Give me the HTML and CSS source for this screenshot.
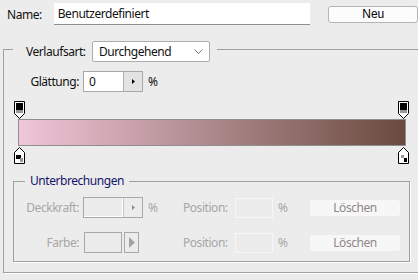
FILE: index.html
```html
<!DOCTYPE html>
<html lang="de">
<head>
    <meta charset="UTF-8">
    <meta name="viewport" content="width=device-width, initial-scale=1.0">
    <title>Verlaufs-Editor</title>
    <link rel="stylesheet" href="styles.css">
</head>
<body>
    <div class="name-row">
        <label class="name-label" for="gradName">Name:</label>
        <input type="text" id="gradName" class="name-input" value="Benutzerdefiniert">
        <button class="btn-new">Neu</button>
    </div>

    <fieldset class="frame outer">
        <legend class="type-legend">
            <span class="type-label">Verlaufsart:</span>
            <span class="select">
                Durchgehend
                <svg class="chevron" width="9" height="5" viewBox="0 0 9 5"><polyline points="0.5,0.5 4.5,4.5 8.5,0.5" fill="none" stroke="#7a7a7a"/></svg>
            </span>
        </legend>

        <div class="field-row smooth-row">
            <span class="field-label">Glättung:</span>
            <span class="spin">
                <span class="spin-value">0</span>
                <span class="spin-btn">
                    <svg width="3" height="5" viewBox="0 0 3 5"><polygon points="0,0 3,2.5 0,5" fill="#000"/></svg>
                </span>
            </span>
            <span class="unit">%</span>
        </div>

        <!-- Verlaufsleiste mit Reglern -->
        <div class="ramp">
            <div class="stop-line">
                <svg class="stop" style="left: 0%;" width="12" height="18" viewBox="0 0 12 18">
                    <path d="M0.5 0.5H10.5V12.5L5.5 17.5L0.5 12.5Z" fill="#fff" stroke="#000"/>
                    <rect x="2" y="2" width="7" height="7" fill="#000"/>
                    <rect x="2" y="9" width="7" height="3" fill="#9a9a9a"/>
                </svg>
                <svg class="stop" style="left: 100%;" width="12" height="18" viewBox="0 0 12 18">
                    <path d="M0.5 0.5H10.5V12.5L5.5 17.5L0.5 12.5Z" fill="#fff" stroke="#000"/>
                    <rect x="2" y="2" width="7" height="7" fill="#000"/>
                    <rect x="2" y="9" width="7" height="3" fill="#9a9a9a"/>
                </svg>
            </div>
            <div class="bar"></div>
            <div class="stop-line bottom">
                <svg class="stop" style="left: 0%;" width="12" height="18" viewBox="0 0 12 18">
                    <path d="M5.5 0.5L10.5 5.5V16.5H0.5V5.5Z" fill="#fff" stroke="#000"/>
                    <rect x="2" y="8" width="5" height="4" fill="#000"/>
                    <rect x="6" y="11" width="3" height="4" fill="#9a9a9a"/>
                </svg>
                <svg class="stop" style="left: 100%;" width="12" height="18" viewBox="0 0 12 18">
                    <path d="M5.5 0.5L10.5 5.5V16.5H0.5V5.5Z" fill="#fff" stroke="#000"/>
                    <rect x="3" y="8" width="3" height="3" fill="#9a9a9a"/>
                    <rect x="6" y="11" width="3" height="4" fill="#000"/>
                </svg>
            </div>
        </div>

        <fieldset class="frame inner">
            <legend class="stops-legend">Unterbrechungen</legend>

            <div class="stop-grid">
                <span class="field-label disabled">Deckkraft:</span>
                <span class="spin off">
                    <span class="spin-value"></span>
                    <span class="spin-btn">
                        <svg width="3" height="5" viewBox="0 0 3 5"><polygon points="0,0 3,2.5 0,5" fill="#8c8c8c"/></svg>
                    </span>
                </span>
                <span class="unit disabled">%</span>
                <span class="disabled">Position:</span>
                <span class="pos-input"></span>
                <span class="unit disabled">%</span>
                <button class="btn-delete">Löschen</button>

                <span class="field-label disabled">Farbe:</span>
                <span class="color-pick">
                    <span class="swatch"></span>
                    <span class="swatch-btn">
                        <svg width="6" height="11" viewBox="0 0 6 11"><polygon points="0,0 6,5.5 0,11" fill="#a3a3a3"/></svg>
                    </span>
                </span>
                <span class="unit"></span>
                <span class="disabled">Position:</span>
                <span class="pos-input"></span>
                <span class="unit disabled">%</span>
                <button class="btn-delete">Löschen</button>
            </div>
        </fieldset>
    </fieldset>
</body>
</html>
```

FILE: styles.css
```css
body {
    margin: 0;
    background: #ececec;
    font-family: "Noto Sans", "Open Sans", sans-serif;
    font-size: 12px;
    letter-spacing: -0.45px;
    color: #111;
    overflow: hidden;
    width: 418px;
    height: 280px;
}
.name-row {
    display: flex;
    align-items: center;
    height: 22px;
    margin-top: 3px;
}
.name-label {
    width: 47px;
    padding-left: 7px;
}
.name-input {
    width: 258px;
    height: 22px;
    box-sizing: border-box;
    border: none;
    border-bottom: 1px solid #8e8e8e;
    background: #fff;
    padding: 0 4px;
    font: inherit;
    letter-spacing: inherit;
    color: #111;
}
.btn-new {
    margin-left: 18px;
    width: 90px;
    height: 17px;
    padding: 0;
    border: 1px solid #b4b4b4;
    border-radius: 3px;
    background: #fcfcfc;
    font-family: "Liberation Sans", Arial, sans-serif;
    font-size: 12px;
    letter-spacing: 0;
    color: #000;
}

.frame {
    margin: 0;
    padding: 0;
    border: 1px solid #a0a0a0;
    box-shadow: 1px 1px 0 #fff;
}
.outer {
    margin: 12px 0 0 3px;
    width: 420px;
    box-sizing: border-box;
    padding-bottom: 10px;
}
.type-legend {
    display: flex;
    align-items: center;
    margin-left: 9px;
    padding: 4px 7px 0 13px;
}
.type-label {
    width: 66px;
}
.select {
    display: flex;
    align-items: center;
    justify-content: space-between;
    width: 118px;
    height: 21px;
    box-sizing: border-box;
    padding: 0 6px 0 6px;
    background: #fff;
    border: 1px solid #adadad;
    border-radius: 2px;
}

.field-row {
    display: flex;
    align-items: center;
    height: 21px;
}
.smooth-row {
    margin-top: 9px;
}
.smooth-row .field-label {
    width: 75px;
}
.field-label {
    text-align: right;
    padding-right: 4px;
}
.spin {
    display: flex;
    width: 60px;
    height: 21px;
    box-sizing: border-box;
    border: 1px solid #a8a8a8;
}
.spin-value {
    flex: 1;
    background: #fff;
    padding-left: 5px;
    line-height: 19px;
}
.spin-btn {
    width: 18px;
    display: flex;
    align-items: center;
    justify-content: center;
    background: #e3e3e3;
    border-left: 1px solid #b0b0b0;
}
.unit {
    padding-left: 5px;
}

.ramp {
    margin: 9px 0 0 10px;
    width: 396px;
}
.stop-line {
    position: relative;
    height: 18px;
    margin: 0 6px;
}
.stop-line.bottom {
    margin-top: 1px;
}
.stop {
    position: absolute;
    top: 0;
    margin-left: -6px;
}
.bar {
    height: 27px;
    margin: 0 4px;
    box-sizing: border-box;
    border: 1px solid #8f8f8f;
    background: linear-gradient(to right, #f0c6d9, #6a4a3e);
}

.inner {
    margin: 8px 0 0 9px;
    width: 397px;
    box-sizing: border-box;
    padding-bottom: 8px;
}
.stops-legend {
    margin-left: 11px;
    padding: 0 5px;
    color: #15156a;
    line-height: 16px;
}
.stop-grid {
    display: grid;
    grid-template-columns: 69px 60px 40px 52px 38px 37px 90px;
    grid-auto-rows: 21px;
    row-gap: 14px;
    align-items: center;
    margin-top: 8px;
}
.disabled {
    color: #a7a7a7;
}
.spin.off .spin-value {
    background: #ececec;
    border-right: 1px solid #fff;
    border-bottom: 1px solid #fff;
}
.spin.off .spin-btn {
    background: #ececec;
    border-left: 1px solid #c6c6c6;
}
.pos-input {
    height: 20px;
    box-sizing: border-box;
    border: 1px solid #f7f7f7;
}
.color-pick {
    display: flex;
    gap: 2px;
    height: 21px;
    padding-left: 1px;
}
.swatch {
    width: 38px;
    box-sizing: border-box;
    border: 1px solid #a8a8a8;
}
.swatch-btn {
    width: 15px;
    box-sizing: border-box;
    border: 1px solid #a8a8a8;
    display: flex;
    align-items: center;
    justify-content: center;
}
.btn-delete {
    height: 16px;
    padding: 0;
    border: none;
    border-radius: 3px;
    background: #f7f7f7;
    font: inherit;
    letter-spacing: inherit;
    color: #8f8787;
    line-height: 16px;
}
```
